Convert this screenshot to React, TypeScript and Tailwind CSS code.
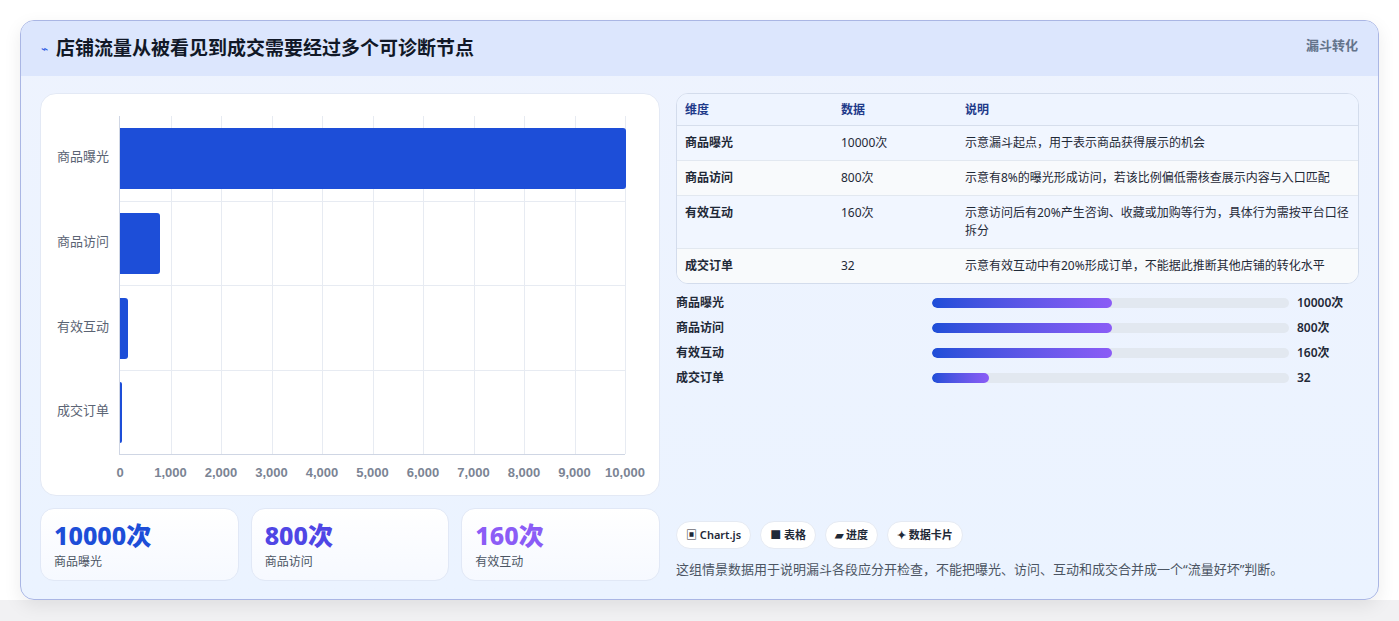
import React from "react";

const F = { fontFamily: '"Noto Sans", "Noto Sans CJK SC", sans-serif' };
const cats = [
  { n: "商品曝光", v: 10000 },
  { n: "商品访问", v: 800 },
  { n: "有效互动", v: 160 },
  { n: "成交订单", v: 32 },
];
const rows = [
  ["商品曝光", "10000次", "示意漏斗起点，用于表示商品获得展示的机会"],
  ["商品访问", "800次", "示意有8%的曝光形成访问，若该比例偏低需核查展示内容与入口匹配"],
  ["有效互动", "160次", "示意访问后有20%产生咨询、收藏或加购等行为，具体行为需按平台口径拆分"],
  ["成交订单", "32", "示意有效互动中有20%形成订单，不能据此推断其他店铺的转化水平"],
];
const prog = [
  ["商品曝光", 50.5, "10000次"],
  ["商品访问", 50.5, "800次"],
  ["有效互动", 50.5, "160次"],
  ["成交订单", 16, "32"],
];

export default function App() {
  return (
    <div style={F} className="w-[1399px] h-[621px] bg-[#f1f1f3] relative">
      <div className="absolute inset-x-0 top-0 h-[600px] bg-white" />
      <div className="absolute left-[20px] top-[20px] w-[1359px] h-[580px] rounded-[14px] border border-[#aab6e4] overflow-hidden bg-gradient-to-b from-[#eef3fe] to-[#ebf3ff] shadow-[0_6px_18px_rgba(0,0,0,0.08)] flex flex-col">
        <div className="h-[55px] bg-[#dce6fd] flex items-center justify-between px-[20px] shrink-0">
          <div className="flex items-center gap-[8px]">
            <span className="text-[#2d5be3] text-[12px]">⌁</span>
            <span className="text-[19px] font-bold text-[#111827]">店铺流量从被看见到成交需要经过多个可诊断节点</span>
          </div>
          <span className="text-[13px] font-bold text-[#64748b] self-start mt-[15px]">漏斗转化</span>
        </div>
        <div className="flex gap-[16px] px-[19px] pt-[17px]">
          <div className="w-[620px] flex flex-col gap-[12px]">
            <div className="h-[403px] bg-white rounded-[16px] border border-[#e3e9f5] relative">
              <div className="absolute left-[78px] top-[22px] w-[506px] h-[339px] border-l border-b border-[#cfd6e4]">
                {Array.from({ length: 10 }).map((_, i) => (
                  <div key={i} className="absolute top-0 bottom-0 w-px bg-[#e7ebf2]" style={{ left: `${(i + 1) * 10}%` }} />
                ))}
                {[1, 2, 3].map((i) => (
                  <div key={i} className="absolute left-0 right-0 h-px bg-[#e7ebf2]" style={{ top: `${i * 25}%` }} />
                ))}
                {cats.map((c, i) => (
                  <div key={c.n} className="absolute left-0 h-[61px] bg-[#1d4ed8] rounded-r-[3px]" style={{ top: 12 + i * 84.75, width: Math.max((c.v / 10000) * 506, 2) }} />
                ))}
                {cats.map((c, i) => (
                  <div key={c.n} className="absolute right-[calc(100%+11px)] text-[13px] text-[#5b6474] whitespace-nowrap" style={{ top: 31 + i * 84.75 }}>{c.n}</div>
                ))}
                {Array.from({ length: 11 }).map((_, i) => (
                  <div key={i} className="absolute top-[calc(100%+9px)] -translate-x-1/2 text-[13px] font-semibold text-[#7b8494]" style={{ left: `${i * 10}%`, fontFamily: '"Liberation Sans", sans-serif' }}>{(i * 1000).toLocaleString("en-US")}</div>
                ))}
              </div>
            </div>
            <div className="flex gap-[12px]">
              {[["10000次", "text-[#1d4ed8]", "商品曝光"], ["800次", "text-[#4f46e5]", "商品访问"], ["160次", "text-[#8b5cf6]", "有效互动"]].map(([v, c, l]) => (
                <div key={l} className="flex-1 h-[73px] rounded-[14px] border border-[#e1e8f6] bg-gradient-to-b from-white to-[#f6f9ff] px-[13px] pt-[8px]">
                  <div className={`text-[25px] font-extrabold leading-[36px] ${c}`}>{v}</div>
                  <div className="text-[12px] text-[#4b5563]">{l}</div>
                </div>
              ))}
            </div>
          </div>
          <div className="flex-1 flex flex-col">
            <div className="rounded-[12px] border border-[#d3dcec] overflow-hidden text-[12px] text-[#1f2937] bg-[#f5f9ff]">
              <div className="flex h-[32px] items-center bg-[#eef4ff] border-b border-[#d6deec] text-[#1e3a8a] font-semibold">
                <div className="w-[164px] pl-[8px]">维度</div>
                <div className="w-[124px]">数据</div>
                <div className="flex-1">说明</div>
              </div>
              {rows.map((r, i) => (
                <div key={i} className={`flex py-[8px] leading-[18px] ${i < 3 ? "border-b border-[#e2e8f0]" : ""} ${i % 2 ? "bg-[#f8fafc]" : "bg-[#f1f6ff]"}`}>
                  <div className="w-[164px] pl-[8px] font-semibold">{r[0]}</div>
                  <div className="w-[124px]">{r[1]}</div>
                  <div className="flex-1 pr-[8px]">{r[2]}</div>
                </div>
              ))}
            </div>
            <div className="flex flex-col gap-[9px] mt-[11px]">
              {prog.map(([n, p, v]) => (
                <div key={n as string} className="flex items-center h-[16px] text-[12px] font-semibold text-[#1f2937]">
                  <div className="w-[256px]">{n}</div>
                  <div className="w-[357px] h-[10px] rounded-full bg-[#e2e8f0] overflow-hidden">
                    <div className="h-full rounded-full bg-gradient-to-r from-[#1d4ed8] to-[#8b5cf6]" style={{ width: `${p}%` }} />
                  </div>
                  <div className="ml-[8px]">{v}</div>
                </div>
              ))}
            </div>
            <div className="flex gap-[9px] mt-[135px] text-[11px] font-semibold text-[#1f2937]">
              {["▣ Chart.js", "■ 表格", "▰ 进度", "✦ 数据卡片"].map((t) => (
                <span key={t} className="h-[28px] px-[9px] rounded-full bg-white border border-[#e5eaf3] flex items-center">{t}</span>
              ))}
            </div>
            <div className="mt-[11px] text-[13px] text-[#4b5563]">这组情景数据用于说明漏斗各段应分开检查，不能把曝光、访问、互动和成交合并成一个“流量好坏”判断。</div>
          </div>
        </div>
      </div>
    </div>
  );
}
